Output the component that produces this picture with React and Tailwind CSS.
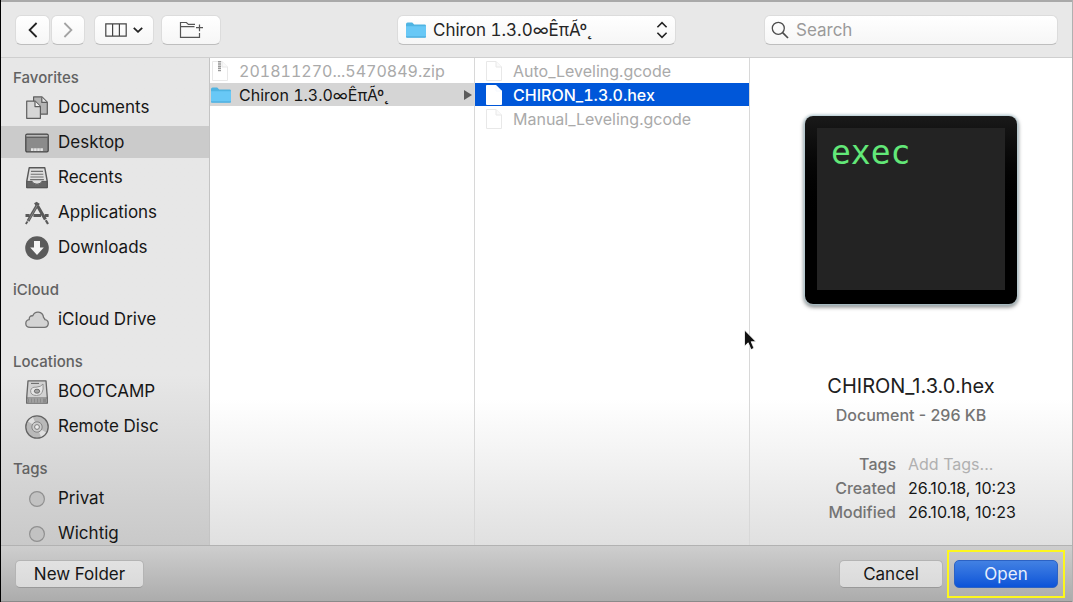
import React from "react";

function FolderIcon({ className }) {
  return (
    <svg viewBox="0 0 22 18" className={className} aria-hidden="true">
      <path d="M1 3.2Q1 1.5 2.6 1.5H7.2L9.2 3.4H19.6Q21 3.4 21 4.8V7H1Z" fill="#4fb4e2" />
      <path d="M1 5.2H21V15.4Q21 16.6 19.8 16.6H2.2Q1 16.6 1 15.4Z" fill="#68c8f6" />
      <path d="M1 15.2H21V15.6Q21 16.8 19.8 16.8H2.2Q1 16.8 1 15.6Z" fill="#53b1df" />
    </svg>
  );
}

function FileIcon({ zip, selected }) {
  return (
    <svg viewBox="0 0 18 22" className="h-[22px] w-[18px] shrink-0" aria-hidden="true">
      <path
        d="M1.5 1.5H11L16.5 7V20.5H1.5Z"
        fill="#fff"
        stroke={selected ? "#fff" : "#e8e8e8"}
      />
      <path d="M11 1.5V7H16.5" fill={selected ? "#fff" : "#fafafa"} stroke={selected ? "#f4f7fd" : "#e8e8e8"} />
      {zip && <path d="M8.5 1V12" stroke="#9a9a9a" strokeWidth="3" strokeDasharray="1.5 .7" />}
    </svg>
  );
}

const icons = {
  documents: (
    <g stroke="#5e5e5e" strokeWidth="1.2" strokeLinejoin="round">
      <path d="M8.6 .9H17L22.3 6.2V18.2H8.6Z" fill="#b4b4b4" />
      <path d="M16.8 1.2V6.4H22" fill="#e4e4e4" />
      <path d="M1.7 5.2H10.2L15.4 10.4V22.3H1.7Z" fill="#d6d6d6" />
      <path d="M10 5.4V10.6H15.2" fill="#f0f0f0" />
    </g>
  ),
  desktop: (
    <g>
      <rect x=".8" y="3.2" width="22.4" height="17.6" rx="1.3" fill="#8b8b8b" stroke="#484848" strokeWidth="1.3" />
      <path d="M1.4 4.8H22.6" stroke="#c2c2c2" strokeWidth="1.3" />
      <path d="M1.4 6.3H22.6" stroke="#555" />
      <path d="M6 18.6H18" stroke="#e4e4e4" strokeWidth="2.6" strokeDasharray="2.6 .5" />
    </g>
  ),
  recents: (
    <g strokeLinejoin="round">
      <path d="M4.2 1.8H19.8L22.2 15V21.6H1.8V15Z" fill="#dedede" stroke="#585858" strokeWidth="1.4" />
      <path d="M6 5.4H18M5.7 8.2H18.3M5.4 11H18.6M5.1 13.6H18.9" stroke="#707070" strokeWidth="1.1" />
      <path d="M1.8 15.4H7.2Q8 18.2 12 18.2T16.8 15.4H22.2V21.6H1.8Z" fill="#666" stroke="#555" />
    </g>
  ),
  applications: (
    <g stroke="#595959" fill="none">
      <path d="M13.4 2L3 20" strokeWidth="3" />
      <path d="M2.5 20.4L.8 23" strokeWidth="1.8" />
      <path d="M10.4 1.5L12 4M12.6 5L20.4 18.5" strokeWidth="3.2" />
      <path d="M20.8 19.3L23 23" strokeWidth="2.2" />
      <path d="M.5 14.5H4.7M8.4 14.5H16M19.8 14.5H23.6" strokeWidth="3" />
      <path d="M12.4 4L3.5 19.5" stroke="#929292" strokeWidth=".8" />
    </g>
  ),
  downloads: (
    <g>
      <circle cx="12" cy="12" r="11.8" fill="#5b5b5b" />
      <path d="M9 5H15V11.5H18.8L12 19L5.2 11.5H9Z" fill="#f4f4f4" />
    </g>
  ),
  cloud: (
    <path
      d="M5.2 19.4Q.8 19.2.8 15.4Q.8 12.2 4.2 11.7Q4 7.4 7.8 7.8Q9.5 3.7 13.4 4.1Q18 4.5 18.6 9.6Q20 10.4 19.8 11.7Q23.3 12.2 23.3 15.4Q23.2 19 19.2 19.4Z"
      fill="#d4d4d4"
      stroke="#737373"
      strokeWidth="1.3"
      strokeLinejoin="round"
    />
  ),
  drive: (
    <g stroke="#666" strokeLinejoin="round">
      <path d="M3 .9H21L22.3 17.5V23.2H1.7V17.5Z" fill="#d2d2d2" strokeWidth="1.3" />
      <path d="M2 18H22" />
      <path d="M2.4 18.6H21.6V22.6H2.4Z" fill="#8b8b8b" stroke="none" />
      <path d="M5 18.5V22.5M8 18.5V22.5M11 18.5V22.5M14 18.5V22.5M17 18.5V22.5" stroke="#c8c8c8" strokeWidth=".7" />
      <path d="M6 3.4H14" strokeWidth="1" />
      <path d="M18 4Q19.4 15.5 11.5 15.5Q5.4 15.3 5.6 10.7Q6.6 6.6 11 7.2Q16 7 18 4Z" fill="#e6e6e6" stroke="#8b8b8b" strokeWidth=".9" />
      <ellipse cx="12" cy="11.2" rx="2.7" ry="2" fill="#a4a4a4" strokeWidth=".9" />
    </g>
  ),
  disc: (
    <g>
      <circle cx="12" cy="12" r="11.2" fill="#b9b9b9" stroke="#646464" strokeWidth="1.3" />
      <path d="M12 12L3 6.5A10.5 10.5 0 0 1 8 2.2ZM12 12L21 17.5A10.5 10.5 0 0 1 16 21.8Z" fill="#e0e0e0" />
      <circle cx="12" cy="12" r="5.2" fill="#cdcdcd" stroke="#858585" />
      <circle cx="12" cy="12" r="2.4" fill="#eee" stroke="#7c7c7c" />
    </g>
  ),
  tag: <circle cx="12" cy="12" r="7.4" fill="#c2c2c2" stroke="#909090" strokeWidth="1.2" />,
};

const sections = [
  {
    title: "Favorites",
    items: [
      ["Documents", "documents"],
      ["Desktop", "desktop"],
      ["Recents", "recents"],
      ["Applications", "applications"],
      ["Downloads", "downloads"],
    ],
  },
  { title: "iCloud", items: [["iCloud Drive", "cloud"]] },
  {
    title: "Locations",
    items: [
      ["BOOTCAMP", "drive"],
      ["Remote Disc", "disc"],
    ],
  },
  {
    title: "Tags",
    items: [
      ["Privat", "tag"],
      ["Wichtig", "tag"],
    ],
  },
];

const toolButton =
  "flex h-[30px] items-center justify-center rounded-md border border-[#dcdcdc] border-b-[#bebebe] bg-linear-to-b from-white to-[#f6f6f6]";

function Toolbar() {
  return (
    <header className="grid h-[58px] shrink-0 grid-cols-[1fr_auto_1fr] items-center border-t-2 border-b border-t-[#a9a9a9] border-b-[#cfcfcf] bg-[#e8e8e8] px-[14px]">
      <div className="flex">
        <div className="flex gap-px">
          <button aria-label="Back" className={`${toolButton} w-[35px]`}>
            <svg viewBox="0 0 10 16" className="h-4 w-[10px]" fill="none" stroke="#222" strokeWidth="1.8">
              <path d="M8.6 1L1.6 8L8.6 15" />
            </svg>
          </button>
          <button aria-label="Forward" className={`${toolButton} w-[34px]`}>
            <svg viewBox="0 0 10 16" className="h-4 w-[10px]" fill="none" stroke="#a3a3a3" strokeWidth="1.8">
              <path d="M1.4 1L8.4 8L1.4 15" />
            </svg>
          </button>
        </div>
        <button aria-label="View as columns" className={`${toolButton} ml-[9px] w-[60px] gap-[6px]`}>
          <svg viewBox="0 0 22 14" className="h-[14px] w-[22px]" fill="none" stroke="#444" strokeWidth="1.2">
            <path d="M.8.8H21.2V13.2H.8ZM7.6 1V13M14.4 1V13" />
          </svg>
          <svg viewBox="0 0 10 6" className="h-[6px] w-[10px]" fill="none" stroke="#222" strokeWidth="1.8">
            <path d="M.8.8L5 4.8L9.2.8" />
          </svg>
        </button>
        <button aria-label="Create folder" className={`${toolButton} ml-[7px] w-[60px]`}>
          <svg viewBox="0 0 24 18" className="h-[18px] w-6" fill="none" stroke="#555" strokeWidth="1.2">
            <path d="M20.5 12V16.4H1.5V1.5H7.4L9.4 3.4H16M1.5 5.6H15.5M20.5 3.5V10.2M17 6.6H24" />
          </svg>
        </button>
      </div>
      <button aria-label="Current folder" className={`${toolButton} w-[279px] px-[7px]`}>
        <FolderIcon className="mr-[6px] h-[18px] w-[22px]" />
        <span className="text-[17px] leading-6 whitespace-nowrap text-[#262626]">Chiron 1.3.0∞ÊπÃº˛</span>
        <svg viewBox="0 0 12 18" className="ml-auto h-[18px] w-3" fill="none" stroke="#222" strokeWidth="1.6">
          <path d="M1.4 6.2L6 1.6L10.6 6.2M1.4 11.8L6 16.4L10.6 11.8" />
        </svg>
      </button>
      <label className={`${toolButton} w-[294px] gap-[7px] justify-self-end px-[6px]`}>
        <svg viewBox="0 0 18 18" className="h-[18px] w-[18px] shrink-0" fill="none" stroke="#4c4c4c" strokeWidth="1.3">
          <circle cx="7.3" cy="7.3" r="6" />
          <path d="M11.6 11.6L17 17" strokeWidth="1.7" />
        </svg>
        <input
          type="search"
          aria-label="Search"
          placeholder="Search"
          className="w-full min-w-0 bg-transparent text-[17px] leading-6 outline-none placeholder:text-[#9a9a9a]"
        />
      </label>
    </header>
  );
}

function Sidebar() {
  return (
    <nav className="flex w-[209px] shrink-0 flex-col gap-[14px] overflow-hidden border-r border-[#c4c4c4] bg-linear-to-b from-[#e7e7e7] from-65% to-[#c9c9c9] pt-[7px]">
      {sections.map((section) => (
        <section key={section.title}>
          <h2 className="flex h-[25px] items-center pt-[2px] pl-3 text-[15px] font-medium text-[#626262]">
            {section.title}
          </h2>
          <ul className="flex flex-col gap-[3px] pt-px">
            {section.items.map(([label, icon]) => (
              <li key={label}>
                <a
                  href="#"
                  className={`flex h-8 items-center gap-[9px] pt-[2px] pl-6 text-[17px] text-[#161616] ${label === "Desktop" ? "bg-[#cbcbcb]" : ""}`}
                >
                  <svg viewBox="0 0 24 24" className="h-6 w-6" aria-hidden="true">
                    {icons[icon]}
                  </svg>
                  {label}
                </a>
              </li>
            ))}
          </ul>
        </section>
      ))}
    </nav>
  );
}

function FileRow({ name, zip, selected }) {
  return (
    <li
      className={`flex h-[23px] items-center gap-[10px] text-base ${selected ? "bg-[#0057d9] font-medium text-white" : "text-[#aaa]"} ${zip ? "pl-px" : "pl-[10px]"}`}
    >
      <FileIcon zip={zip} selected={selected} />
      {name}
    </li>
  );
}

function Preview() {
  return (
    <section className="flex flex-col items-center pt-[58px] proportional-nums">
      <div className="h-[188px] w-[212px] rounded-lg bg-linear-to-b from-[#191919] to-black to-60% p-3 pb-[14px] shadow-[0_0_3px_1px_#b9d4dd,0_2px_4px_1px_#777]">
        <div className="h-full bg-[#232323] px-[14px] pt-[5px] font-['DejaVu_Sans_Mono',monospace] text-[33px] leading-10 text-[#62e878]">
          exec
        </div>
      </div>
      <h1 className="mt-[68px] text-xl leading-7 text-[#202020]">CHIRON_1.3.0.hex</h1>
      <p className="mt-[3px] text-base leading-6 font-medium text-[#747474]">Document - 296 KB</p>
      <dl className="mt-[25px] grid w-full grid-cols-[146fr_164fr] gap-x-3 text-base leading-6">
        <dt className="text-right font-medium text-[#747474]">Tags</dt>
        <dd className="text-[#b0b0b0]">Add Tags...</dd>
        <dt className="text-right font-medium text-[#747474]">Created</dt>
        <dd className="text-[#161616]">26.10.18, 10:23</dd>
        <dt className="text-right font-medium text-[#747474]">Modified</dt>
        <dd className="text-[#161616]">26.10.18, 10:23</dd>
      </dl>
    </section>
  );
}

function Footer() {
  const plain =
    "h-7 rounded-[5px] border border-[#b4b4b4] border-b-[#999] bg-linear-to-b from-[#e2e2e2] to-[#dadada] pt-[2px] text-[17px] leading-none text-[#161616]";
  return (
    <footer className="flex h-[57px] shrink-0 items-center border-t border-b border-t-[#b2b2b2] border-b-[#8a8a8a] bg-linear-to-b from-[#cecece] to-[#acacac] pr-[7px] pl-[14px]">
      <button className={`${plain} w-[129px]`}>New Folder</button>
      <button className={`${plain} ml-auto w-[104px]`}>Cancel</button>
      <div className="ml-1 border-2 border-[#fdf71c] px-[5px] py-2">
        <button className="block h-7 w-[104px] rounded-[5px] border border-[#2c62c4] bg-linear-to-b from-[#4281e3] to-[#0b53d8] pt-[2px] text-[17px] leading-none text-[#e8effc]">
          Open
        </button>
      </div>
    </footer>
  );
}

export default function App() {
  return (
    <div className="relative flex h-screen flex-col overflow-hidden border-r border-l border-r-[#b0b0b0] border-l-black font-['Inter','Liberation_Sans',sans-serif] tabular-nums">
      <Toolbar />
      <main className="flex min-h-0 flex-1">
        <Sidebar />
        <div className="grid flex-1 grid-cols-[265fr_275fr_322fr] bg-linear-to-b from-white from-70% to-[#e0e0e0]">
          <ul className="flex flex-col gap-px border-r border-[#d8d8d8] pt-px">
            <FileRow name="201811270...5470849.zip" zip />
            <li className="flex h-[23px] items-center bg-[#d5d5d5] pr-[2px] text-base text-[#161616]">
              <FolderIcon className="mr-[7px] h-[18px] w-[22px]" />
              Chiron 1.3.0∞ÊπÃº˛
              <svg viewBox="0 0 8 10" className="ml-auto h-[10px] w-2" fill="#5c5c5c" aria-hidden="true">
                <path d="M0 0L8 5L0 10Z" />
              </svg>
            </li>
          </ul>
          <ul className="flex flex-col gap-px border-r border-[#d8d8d8] pt-px">
            <FileRow name="Auto_Leveling.gcode" />
            <FileRow name="CHIRON_1.3.0.hex" selected />
            <FileRow name="Manual_Leveling.gcode" />
          </ul>
          <Preview />
        </div>
      </main>
      <Footer />
      <svg viewBox="0 0 14 22" className="absolute top-[329px] left-[742px] h-[22px] w-[14px]" aria-hidden="true">
        <path d="M1.5 1V17.2L5.2 13.8L8 20.6L11 19.3L8.2 12.7H13Z" fill="#111" stroke="#fff" strokeWidth=".8" />
      </svg>
    </div>
  );
}
